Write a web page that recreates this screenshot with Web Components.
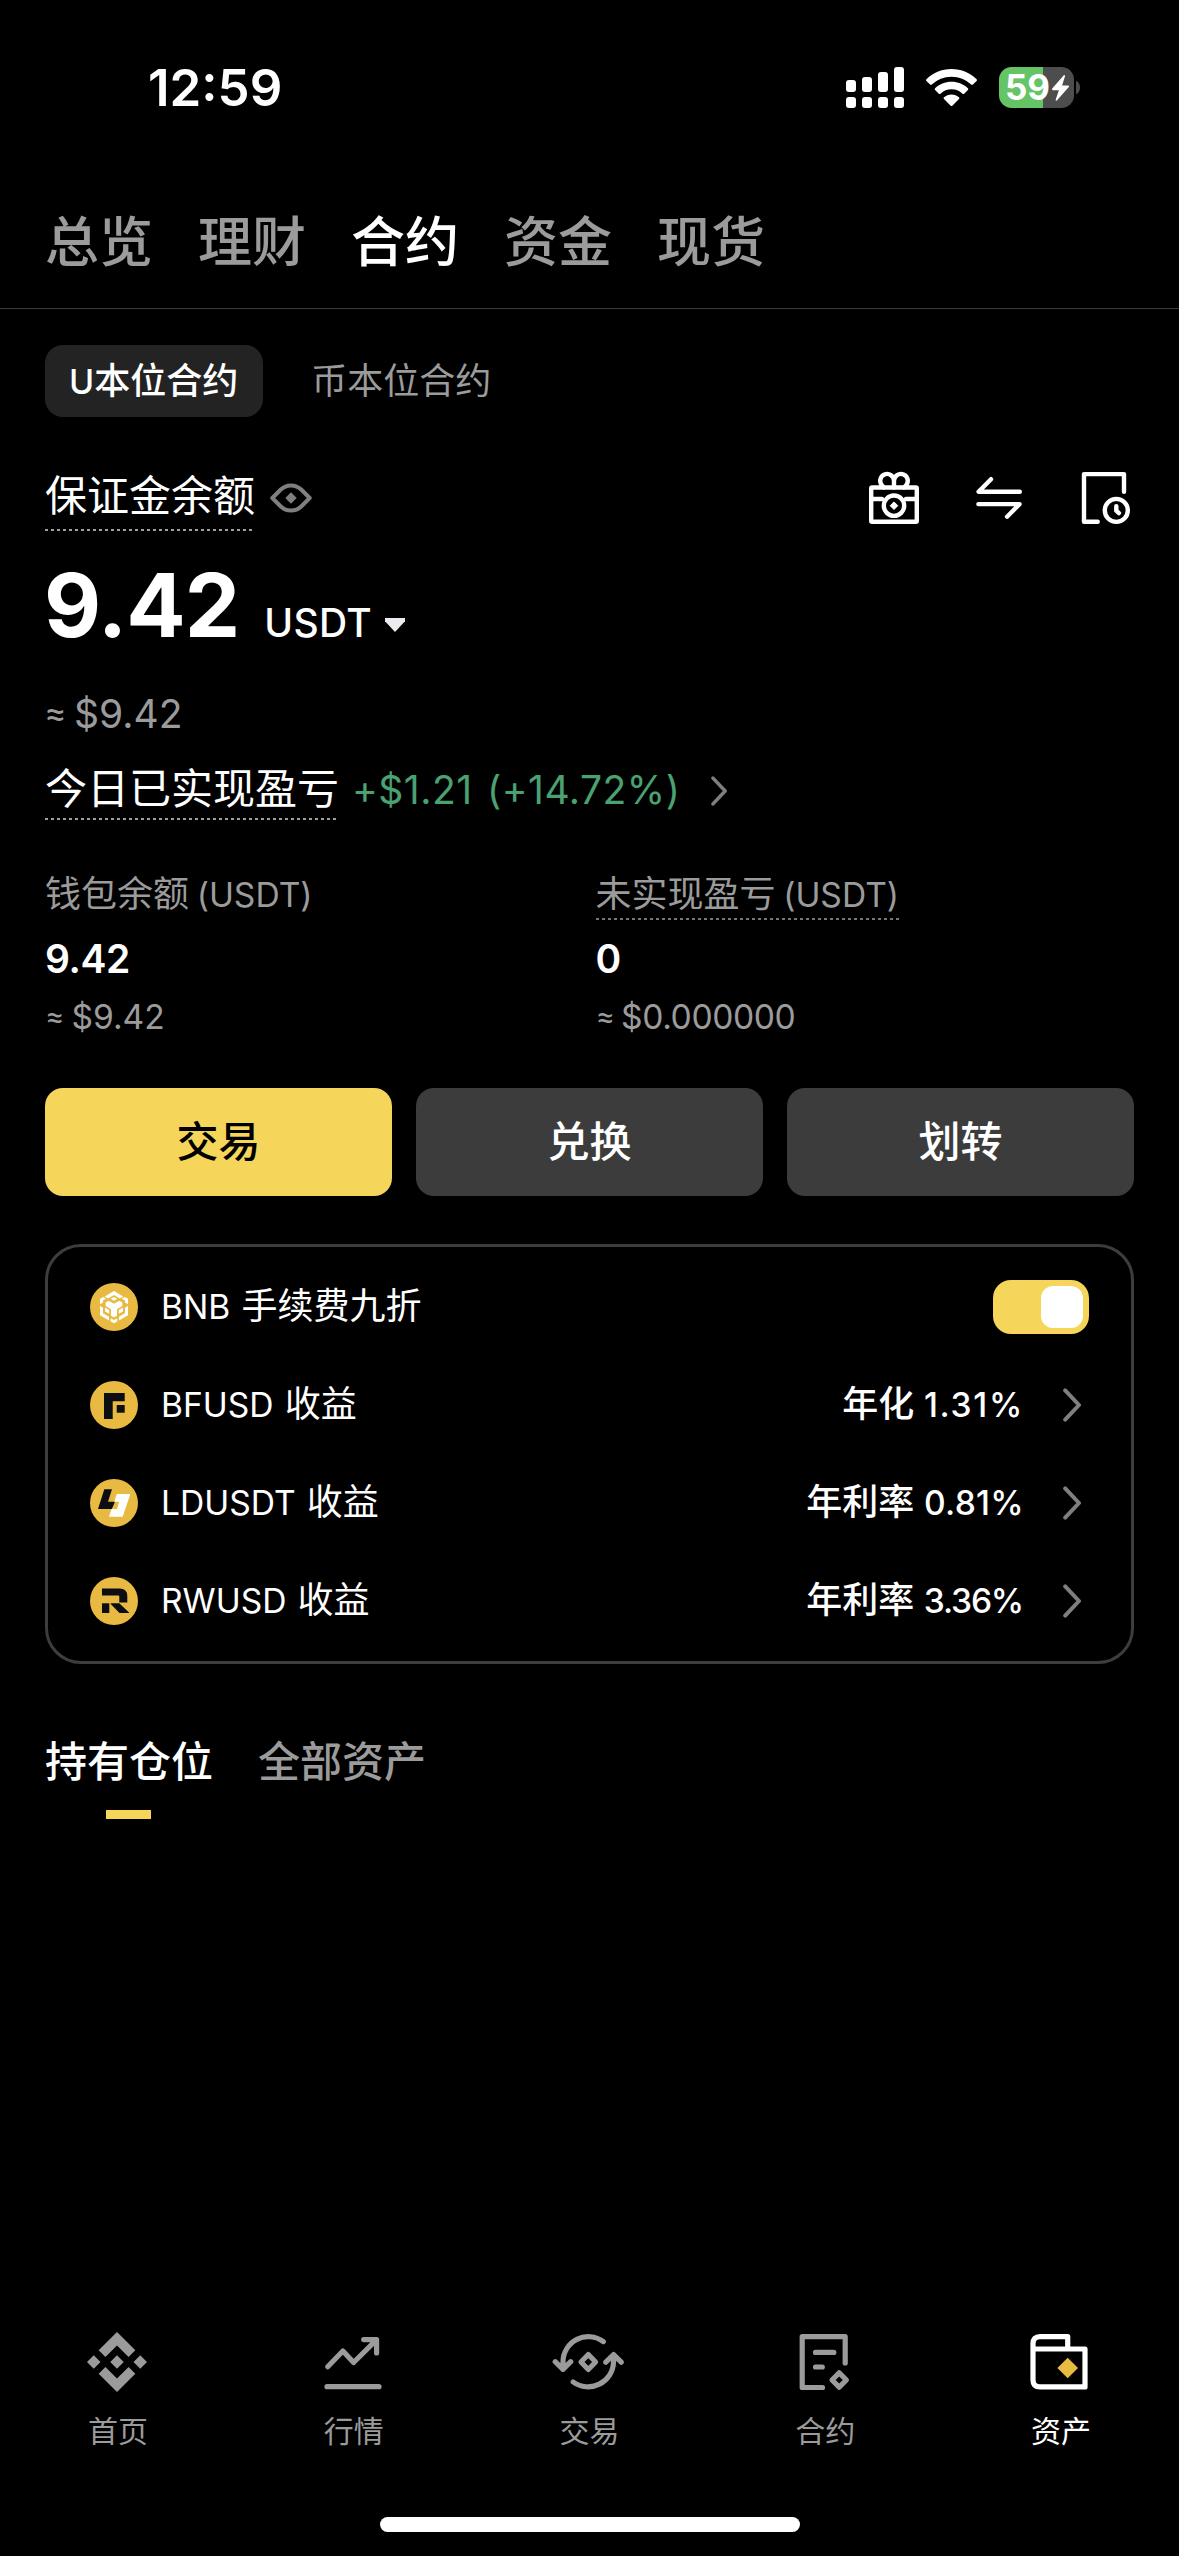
<!DOCTYPE html>
<html lang="zh-CN">
<head>
<meta charset="utf-8">
<title>资产 - 合约</title>
<style>
  html, body { margin: 0; background: #000; }
  body { width: 1179px; height: 2556px; overflow: hidden; color: #fff; font-family: Inter, "Noto Sans CJK SC", sans-serif; font-weight: 400; }
</style>
</head>
<body>
<wallet-app></wallet-app>
<script>
const define = (name, html) => {
  const tpl = document.createElement('template');
  tpl.innerHTML = html;
  customElements.define(name, class extends HTMLElement {
    constructor() {
      super();
      this.attachShadow({ mode: 'open' }).append(tpl.content.cloneNode(true));
    }
  });
};

/* ---------- icons ---------- */
const ICONS = {
  signal: [58, 42, `<g fill="#fff"><rect x="0" y="13" width="10" height="12" rx="3"/><rect x="16" y="10" width="10" height="15" rx="3"/><rect x="32" y="5" width="10" height="20" rx="3"/><rect x="48" y="0" width="10" height="25" rx="3"/><rect x="0" y="30" width="10" height="11" rx="3"/><rect x="16" y="30" width="10" height="11" rx="3"/><rect x="32" y="30" width="10" height="11" rx="3"/><rect x="48" y="30" width="10" height="11" rx="3"/></g>`],
  wifi: [51, 38, `<g fill="#fff"><path d="M25.5 0C35.4 0 44.3 3.9 50.6 10.2c.5.5.5 1.200 0 1.700l-3.700 3.700c-.5.5-1.200.5-1.700 0A28.200 28.200 0 0 0 25.500 7.700a28.200 28.200 0 0 0-19.700 7.900c-.5.5-1.200.5-1.700 0L.4 11.900c-.5-.5-.5-1.200 0-1.700C6.700 3.900 15.600 0 25.500 0z"/><path d="M25.500 12.800c6.400 0 12.200 2.500 16.400 6.500.5.5.5 1.300 0 1.700l-3.700 3.700c-.5.5-1.200.5-1.700 0a16 16 0 0 0-22 0c-.5.5-1.200.5-1.700 0L9.100 21c-.5-.5-.5-1.200 0-1.700 4.200-4 10-6.500 16.400-6.500z"/><path d="M25.500 25.500c2.900 0 5.500 1.100 7.500 2.800.5.5.5 1.200 0 1.700l-6.700 6.700c-.4.4-1.200.4-1.600 0L18 30c-.5-.5-.5-1.300 0-1.700 2-1.700 4.600-2.800 7.500-2.800z"/></g>`],
  bolt: [20, 26, `<path fill="#fff" d="M12.600.4 1.200 13.600c-.6.8-.2 1.600.7 1.600h6L4.700 24.500c-.3 1.100.6 1.600 1.400.8L17.800 12c.6-.8.3-1.600-.7-1.600h-6L14 1.300c.3-1-.6-1.700-1.400-.9z"/>`],
  eye: [48, 48, `<g fill="none" stroke="#7f7f7f" stroke-width="4" stroke-linejoin="round"><path d="M5.300 24 13.800 15.500Q18 11.400 24 11.400T34.200 15.500L42.700 24 34.200 32.500Q30 36.600 24 36.600T13.800 32.500Z"/></g><path fill="#7f7f7f" d="M24 18.300 29.700 24 24 29.700 18.300 24Z"/>`],
  gift: [60, 60, `<g fill="none" stroke="#fff" stroke-width="4.400" stroke-linejoin="round" stroke-linecap="round"><rect x="7.200" y="19.500" width="45.600" height="34.300" rx="1"/><path d="M7.200 31H18M42 31H52.800M30 19.500V12.800A6.900 6.900 0 1 0 18.200 17.700L20 19.500M30 12.800A6.900 6.900 0 1 1 41.800 17.700L40 19.500"/><circle cx="30" cy="37.700" r="10.200"/></g><path fill="#fff" stroke="#fff" stroke-linejoin="round" d="M30 33.900 33.800 37.700 30 41.500 26.200 37.700Z"/>`],
  transfer: [60, 60, `<path fill="none" stroke="#fff" stroke-width="4.400" stroke-linejoin="round" stroke-linecap="round" d="M22 11.200 9.600 23.700H50.800M9.400 36.100H50.600L38.100 48.700"/>`],
  history: [60, 60, `<g fill="none" stroke="#fff" stroke-width="4.400" stroke-linejoin="round" stroke-linecap="round"><path d="M50 23.800V6.100H10V53.700H23.700"/><circle cx="42.300" cy="42.400" r="11.500"/><path d="M42.300 38.200V42.700L44.900 45.100"/></g>`],
  chevron: [18, 34, `<path fill="none" stroke="#7f7f7f" stroke-width="4" stroke-linecap="round" stroke-linejoin="round" d="M2.200 2.400 16 17 2.200 31.600"/>`],
  caret: [20, 14, `<path fill="#eaecef" d="M0 0H20V3.200L10 14 0 3.200Z"/>`],
  bnb: [48, 48, `<circle cx="24" cy="24" r="24" fill="#e8ba42"/><g fill="#fff"><path d="M24 8 33.300 13.400 29.800 15.400 24 12.100 18.200 15.400 14.700 13.400Z"/><path d="M24 13.900 27.300 15.800 24 17.700 20.700 15.800Z"/><path d="M18.800 17.700 24 20.700 29.200 17.700 32.300 19.500V23L27 26.200V32.800L24 34.500 21 32.800V26.200L15.700 23V19.500Z"/><path d="M10 15.800 13.300 13.900 16.200 15.600 13 17.500V19.500L10 21.300Z"/><path d="M38 15.800 34.700 13.900 31.800 15.600 35 17.500V19.500L38 21.300Z"/><path d="M10 23 13 24.800V30.300L19 33.800V37.400L10 32.200Z"/><path d="M38 23 35 24.800V30.300L29 33.800V37.400L38 32.200Z"/><path d="M15 24.500 19.200 27V30.800L15 28.400Z"/><path d="M33 24.500 28.800 27V30.800L33 28.400Z"/><path d="M20.700 35.200 24 37.100 27.300 35.200V38.500L24 40.300 20.700 38.500Z"/></g>`],
  bfusd: [48, 48, `<circle cx="24" cy="24" r="24" fill="#e8ba42"/><g fill="#0d0e12"><path d="M14 12H34.700V20.300H22.700V38H14Z"/><rect x="26.700" y="24" width="8" height="7.700"/></g>`],
  ldusdt: [48, 48, `<circle cx="24" cy="24" r="24" fill="#e8ba42"/><path fill="#0d0e12" d="M14.300 10.300H22L18 22.700H25L21.800 30H8Z"/><path fill="#fff" d="M26.700 15H40.300L32.700 37.700H19L21.500 30H27L29.300 22.700H24.300Z"/>`],
  rwusd: [48, 48, `<circle cx="24" cy="24" r="24" fill="#e8ba42"/><g fill="#0d0e12"><path d="M12 11.500H29.500Q37.300 11.500 37.300 19V25.500H29.300V19.500Q29.300 18.500 28.300 18.500H12Z"/><path d="M12 26.300H19.300V36H12Z"/><path d="M20.700 26.300H29.300L39.500 36H29.500L20.700 27Z"/></g>`],
  home: [72, 72, `<path fill="#9b9b9b" transform="translate(6 6) scale(2.500)" d="M5.410 12 2.700 14.700 0 12l2.700-2.700L5.410 12zm6.590-6.600 4.630 4.640 2.700-2.700L12 0 4.670 7.330l2.700 2.700L12 5.400zm9.300 3.900L18.600 12l2.700 2.700L24 12l-2.700-2.700zM12 18.600l-4.630-4.630-2.700 2.700L12 24l7.330-7.330-2.700-2.700L12 18.600zm0-3.900 2.700-2.700L12 9.300 9.300 12l2.700 2.700z"/>`],
  markets: [72, 72, `<path fill="none" stroke="#9b9b9b" stroke-width="5.200" stroke-linecap="round" stroke-linejoin="round" d="M10 60.700H62M10.700 40.700 25.900 25 36.600 36.500 59.400 13.800M46.700 13.600H59.600V27"/>`],
  trade: [72, 72, `<g fill="none" stroke="#9b9b9b" stroke-width="5.200" stroke-linecap="round" stroke-linejoin="round"><path d="M11 42V36A25.300 25.300 0 0 1 51.300 15.600M3.200 35.700 11 43.300 18.700 35.700M61.500 30V36A25.400 25.400 0 0 1 21.200 56M53.800 36.200 61.600 28.600 69.200 36.200"/><path d="M36.300 28.500 43.600 36 36.300 43.500 29 36Z"/></g>`],
  futures: [72, 72, `<g fill="none" stroke="#9b9b9b" stroke-width="5.200" stroke-linecap="round" stroke-linejoin="round"><path d="M57.200 37V10.600H14.200V61.500H34.500M27.500 26.400H45.800M27.500 41H34.300"/><path d="M51.200 46.800 58.400 54 51.200 61.200 44 54Z"/></g>`],
  wallet: [72, 72, `<path fill="none" stroke="#fff" stroke-width="5.200" stroke-linecap="round" stroke-linejoin="round" d="M43.700 23V10.700H16Q9 10.700 9 17.700V54Q9 60.900 16 60.900H61V23H9"/><path fill="#e8ba42" d="M43.700 31.800 54 42 43.700 52.200 33.400 42Z"/>`]
};
customElements.define('app-icon', class extends HTMLElement {
  constructor() { super(); this.attachShadow({ mode: 'open' }); }
  connectedCallback() {
    const [w, h, body] = ICONS[this.getAttribute('name')];
    this.shadowRoot.innerHTML = `<style>:host{display:block;flex:none;width:${w}px;height:${h}px}svg{display:block}</style><svg width="${w}" height="${h}" viewBox="0 0 ${w} ${h}">${body}</svg>`;
  }
});

/* ---------- status bar ---------- */
define('status-bar', `<style>
  :host { display: flex; height: 178px; box-sizing: border-box; padding: 67px 99px 0 148px; justify-content: space-between; align-items: flex-start; }
  .time { font: 600 51px/42px Inter; }
  .right { display: flex; align-items: flex-start; }
  app-icon[name=wifi] { margin: 2px 22px 0 22px; }
  .bat { display: flex; align-items: center; width: 75px; height: 41px; border-radius: 12.500px; background: linear-gradient(90deg, #64c466 44px, #4d4d4d 44px); box-sizing: border-box; padding-left: 6px; }
  .bat span { font: 700 35px/41px Inter; }
  .bat app-icon { margin-left: 1px; }
  .nub { width: 4px; height: 13px; margin: 14px 0 0 2px; border-radius: 0 4px 4px 0 / 0 6.500px 6.500px 0; background: #4d4d4d; }
</style>
<div class="time">12:59</div>
<div class="right"><app-icon name="signal"></app-icon><app-icon name="wifi"></app-icon><div class="bat"><span>59</span><app-icon name="bolt"></app-icon></div><div class="nub"></div></div>`);

/* ---------- top account tabs ---------- */
define('account-tabs', `<style>
  :host { display: flex; gap: 45px; height: 131px; box-sizing: border-box; padding: 0 45px; border-bottom: 1px solid #3a3a3a; font-size: 54px; line-height: 130px; font-weight: 500; color: #9b9b9b; }
  ::slotted([active]) { color: #fff; }
</style><slot></slot>`);

/* ---------- chips ---------- */
define('segment-chips', `<style>
  :host { display: flex; gap: 24px; height: 72px; margin-top: 36px; font-size: 36px; line-height: 72px; color: #9b9b9b; }
  ::slotted(*) { padding: 0 24px; border-radius: 18px; }
  ::slotted([active]) { padding-right: 25px; background: #232323; color: #fff; font-weight: 500; }
</style><slot></slot>`);

/* ---------- text with a dashed rule beneath ---------- */
define('hint-label', `<style>
  :host { display: block; box-sizing: border-box; white-space: nowrap; background: repeating-linear-gradient(90deg, var(--rule, #a0a0a0) 0 3px, transparent 3px 6px) left bottom / 100% 2px no-repeat; }
</style><slot></slot>`);

/* ---------- balance ---------- */
define('balance-summary', `<style>
  :host { display: block; margin-top: 48px; }
  .row { display: flex; align-items: center; }
  .head { height: 66px; font-size: 42px; }
  .head hint-label { height: 66px; line-height: 62px; width: 208px; }
  .head app-icon[name=eye] { margin-left: 14px; }
  .tools { display: flex; gap: 45px; margin-left: auto; }
  .total { display: flex; align-items: baseline; height: 88px; margin-top: 30px; margin-left: -1px; line-height: 88px; }
  .total b { font-size: 88px; font-weight: 700; letter-spacing: -.9px; }
  .total span { font-size: 39px; font-weight: 500; margin-left: 25px; letter-spacing: .3px; }
  .total app-icon { margin-left: 13px; align-self: center; margin-top: 40px; }
  .approx { height: 46px; margin-top: 41px; font-size: 39px; line-height: 46px; color: #9b9b9b; word-spacing: -3.500px; }
  .approx i { font-style: normal; font-family: Lato; font-weight: 500; margin-left: -1px; }
  .pnl { height: 66px; margin-top: 18px; }
  .pnl hint-label { height: 66px; line-height: 64px; padding-top: 3px; font-size: 42px; width: 291px; }
  .gain { color: #4aa171; font-size: 39px; line-height: 66px; padding-top: 6px; margin-left: 16px; letter-spacing: .5px; word-spacing: 3px; }
  .pnl app-icon { margin-left: 30px; margin-top: 8px; transform: scale(.88); }
</style>
<div class="row head"><hint-label>保证金余额</hint-label><app-icon name="eye"></app-icon>
  <div class="tools"><app-icon name="gift"></app-icon><app-icon name="transfer"></app-icon><app-icon name="history"></app-icon></div></div>
<div class="total"><b>9.42</b><span>USDT</span><app-icon name="caret"></app-icon></div>
<div class="approx"><i>≈</i> $9.42</div>
<div class="row pnl"><hint-label>今日已实现盈亏</hint-label><div class="gain">+$1.21 (+14.72%)</div><app-icon name="chevron"></app-icon></div>`);

/* ---------- two-column stats ---------- */
define('stat-cell', `<style>
  :host { display: block; flex: 1; }
  .label { display: flex; height: 49px; line-height: 46px; font-size: 36px; word-spacing: -2.500px; color: #9b9b9b; }
  .value { margin-top: 16px; font-size: 39px; line-height: 46px; font-weight: 600; letter-spacing: -.4px; }
  .sub { margin-top: 14px; font-size: 33.600px; line-height: 40px; word-spacing: -2.500px; color: #9b9b9b; }
</style>
<div class="label"><slot name="label"></slot></div><div class="value"><slot name="value"></slot></div><div class="sub"><slot></slot></div>`);
define('balance-stats', `<style>
  :host { display: flex; gap: 12px; margin-top: 51px; height: 165px; }
  small { font-size: 33.600px; }
  i { font-style: normal; font-family: Lato; font-weight: 500; }
  hint-label { --rule: #777; height: 49px; }
  .zeros { letter-spacing: -.4px; }
</style>
<stat-cell><span slot="label">钱包余额 <small>(USDT)</small></span><span slot="value">9.42</span><i>≈</i> $9.42</stat-cell>
<stat-cell><hint-label slot="label">未实现盈亏 <small>(USDT)</small></hint-label><span slot="value">0</span><span class="zeros"><i>≈</i> $0.000000</span></stat-cell>`);

/* ---------- action buttons ---------- */
define('action-button', `<style>
  :host { display: block; flex: 1; height: 108px; border-radius: 18px; background: #3c3c3c; color: #fff; text-align: center; font-size: 42px; line-height: 107px; font-weight: 500; }
  :host([primary]) { background: #f5d55a; color: #000; }
</style><slot></slot>`);
define('action-row', `<style>:host { display: flex; gap: 24px; margin-top: 52px; }</style><slot></slot>`);

/* ---------- benefits card ---------- */
define('toggle-switch', `<style>
  :host { display: flex; justify-content: flex-end; width: 96px; height: 54px; box-sizing: border-box; padding: 6px; border-radius: 18px; background: #f5d55a; }
  div { width: 42px; height: 42px; border-radius: 12px; background: #fff; }
</style><div></div>`);
define('benefit-row', `<style>
  :host { display: flex; align-items: center; height: 98px; font-size: 36px; line-height: 50px; }
  .name { margin-left: 23px; padding-bottom: 1px; word-spacing: 1px; }
  .end { display: flex; align-items: center; margin-left: auto; }
  ::slotted(.rate) { font-weight: 500; padding-bottom: 1px; margin-right: 39px; white-space: nowrap; }
  ::slotted(app-icon[slot=end]) { margin-right: 8px; }
</style>
<slot name="icon"></slot><div class="name"><slot></slot></div><div class="end"><slot name="end"></slot></div>`);
define('benefit-card', `<style>
  :host { display: block; box-sizing: border-box; height: 420px; margin-top: 48px; padding: 11px 42px 0; border: 3px solid #3d3d3d; border-radius: 36px; }
  small { font-size: 33.600px; }
</style>
<benefit-row><app-icon slot="icon" name="bnb"></app-icon><small>BNB</small> 手续费九折<toggle-switch slot="end"></toggle-switch></benefit-row>
<benefit-row><app-icon slot="icon" name="bfusd"></app-icon><small>BFUSD</small> 收益<span class="rate" slot="end">年化 <small style="letter-spacing:1.700px">1.31%</small></span><app-icon slot="end" name="chevron"></app-icon></benefit-row>
<benefit-row><app-icon slot="icon" name="ldusdt"></app-icon><small>LDUSDT</small> 收益<span class="rate" slot="end">年利率 <small style="letter-spacing:.300px">0.81%</small></span><app-icon slot="end" name="chevron"></app-icon></benefit-row>
<benefit-row><app-icon slot="icon" name="rwusd"></app-icon><small>RWUSD</small> 收益<span class="rate" slot="end">年利率 <small style="letter-spacing:-1.200px;margin-right:1px">3.36%</small></span><app-icon slot="end" name="chevron"></app-icon></benefit-row>`);

/* ---------- position tabs ---------- */
define('position-tabs', `<style>
  :host { display: flex; gap: 45px; margin-top: 68px; font-size: 42px; line-height: 60px; font-weight: 500; color: #9b9b9b; }
  div { display: flex; flex-direction: column; align-items: center; }
  .on { color: #fff; }
  .on::after { content: ""; width: 45px; height: 9px; margin: 18px 1px 0 0; background: #f5d55a; }
</style><div class="on">持有仓位</div><div>全部资产</div>`);

/* ---------- bottom navigation ---------- */
define('nav-item', `<style>
  :host { display: flex; flex: 1; flex-direction: column; align-items: center; color: #9b9b9b; font-size: 30px; line-height: 36px; }
  :host([active]) { color: #fff; }
  slot[name=icon] { display: block; height: 72px; margin: 0 2px 15px 0; }
</style><slot name="icon"></slot><slot></slot>`);
define('bottom-nav', `<style>
  :host { display: block; margin-top: auto; height: 230px; }
  nav { display: flex; height: 191px; }
  .home { width: 420px; height: 15px; margin: 0 auto; border-radius: 8px; background: #fff; }
</style>
<nav>
<nav-item><app-icon slot="icon" name="home"></app-icon>首页</nav-item>
<nav-item><app-icon slot="icon" name="markets"></app-icon>行情</nav-item>
<nav-item><app-icon slot="icon" name="trade"></app-icon>交易</nav-item>
<nav-item><app-icon slot="icon" name="futures"></app-icon>合约</nav-item>
<nav-item active><app-icon slot="icon" name="wallet"></app-icon>资产</nav-item>
</nav><div class="home"></div>`);

/* ---------- page ---------- */
define('wallet-app', `<style>
  :host { display: flex; flex-direction: column; width: 1179px; height: 2556px; background: #000; }
  main { padding: 0 45px; }
  small { font-size: 34px; line-height: 1; }
</style>
<status-bar></status-bar>
<account-tabs><span>总览</span><span>理财</span><span active>合约</span><span>资金</span><span>现货</span></account-tabs>
<main>
<segment-chips><span active><small>U</small>本位合约</span><span>币本位合约</span></segment-chips>
<balance-summary></balance-summary>
<balance-stats></balance-stats>
<action-row><action-button primary>交易</action-button><action-button>兑换</action-button><action-button>划转</action-button></action-row>
<benefit-card></benefit-card>
<position-tabs></position-tabs>
</main>
<bottom-nav></bottom-nav>`);
</script>
</body>
</html>
